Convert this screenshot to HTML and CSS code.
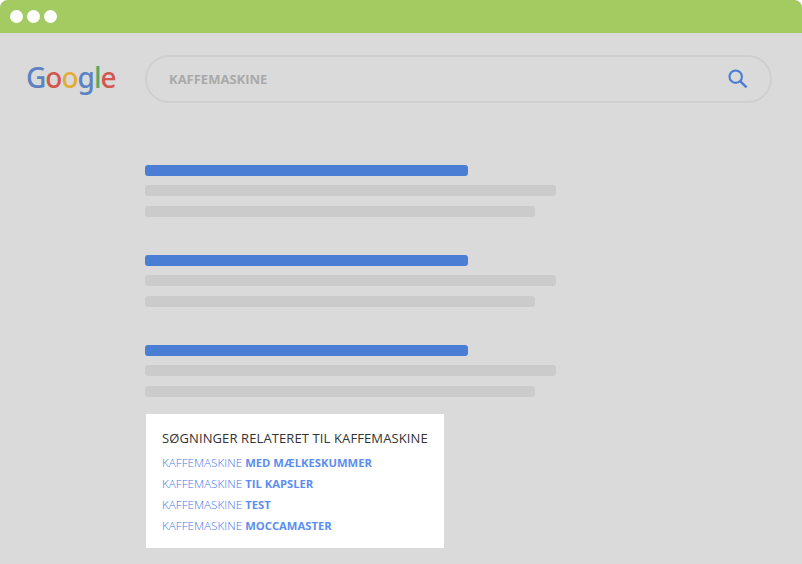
FILE: index.html
```html
<!DOCTYPE html>
<html lang="en">
<head>
    <meta charset="UTF-8">
    <meta name="viewport" content="width=device-width, initial-scale=1.0">
    <title>Kaffemaskine</title>
    <link rel="stylesheet" href="styles.css">
</head>
<body>
    <div class="window">
        <div class="titlebar">
            <span class="dot"></span>
            <span class="dot"></span>
            <span class="dot"></span>
        </div>
        <div class="header">
            <div class="logo"><span class="blue">G</span><span class="red">o</span><span class="yellow">o</span><span class="blue">g</span><span class="green">l</span><span class="red">e</span></div>
            <div class="searchbox">
                <span class="query">KAFFEMASKINE</span>
                <svg class="search-icon" width="20" height="20" viewBox="0 0 20 20">
                    <circle cx="7.7" cy="7.7" r="6.2" fill="none" stroke="#4a7dd4" stroke-width="2.1"/>
                    <line x1="12.3" y1="12.3" x2="18.6" y2="18.4" stroke="#4a7dd4" stroke-width="2.4"/>
                </svg>
            </div>
        </div>
        <div class="results">
            <div class="result">
                <div class="bar title"></div>
                <div class="bar line"></div>
                <div class="bar line short"></div>
            </div>
            <div class="result">
                <div class="bar title"></div>
                <div class="bar line"></div>
                <div class="bar line short"></div>
            </div>
            <div class="result">
                <div class="bar title"></div>
                <div class="bar line"></div>
                <div class="bar line short"></div>
            </div>
        </div>
        <div class="related">
            <h2>SØGNINGER RELATERET TIL KAFFEMASKINE</h2>
            <ul>
                <li>KAFFEMASKINE <b>MED MÆLKESKUMMER</b></li>
                <li>KAFFEMASKINE <b>TIL KAPSLER</b></li>
                <li>KAFFEMASKINE <b>TEST</b></li>
                <li>KAFFEMASKINE <b>MOCCAMASTER</b></li>
            </ul>
        </div>
    </div>
</body>
</html>
```

FILE: styles.css
```css
html, body { margin: 0; padding: 0; background-color: #fff; }
body { font-family: "Open Sans", Arial, sans-serif; }
.window { width: 802px; height: 564px; background-color: #dadada; border-radius: 8px 8px 0 0; overflow: hidden; }
.titlebar { height: 33px; background-color: #a3cb62; display: flex; align-items: center; gap: 4px; padding-left: 9.5px; padding-bottom: 1px; box-sizing: border-box; }
.dot { width: 13px; height: 13px; background-color: #fff; border-radius: 50%; }
.header { display: flex; align-items: center; padding: 22px 30px 0 26px; }
.logo { width: 119px; padding-bottom: 3px; font-family: "Noto Sans", sans-serif; font-size: 28px; font-weight: 500; line-height: 45px; letter-spacing: -1px; }
.blue { color: #5b83c4; }
.red { color: #d2574e; }
.yellow { color: #e2ae35; }
.green { color: #55a868; }
.searchbox { width: 627px; height: 48px; box-sizing: border-box; border: 2px solid #cfcfcf; border-radius: 24px; display: flex; align-items: center; justify-content: space-between; padding: 0 22px 0 22px; }
.query { font-size: 13px; font-weight: 700; color: #a9a9a9; }
.results { display: flex; flex-direction: column; gap: 38px; padding: 62px 0 0 145px; }
.bar { height: 11px; border-radius: 3px; }
.title { width: 323px; background-color: #4a7dd4; }
.line { width: 411px; background-color: #cbcbcb; margin-top: 9px; }
.short { width: 389.5px; margin-top: 10px; }
.related { width: 298px; height: 134px; box-sizing: border-box; margin: 17px 0 0 146px; padding: 15px 0 0 16px; background-color: #fff; }
.related h2 { margin: 0 0 5px 0; font-size: 13px; line-height: 18px; font-weight: 400; letter-spacing: 0.11px; color: #333; white-space: nowrap; }
.related ul { margin: 0; padding: 0; list-style: none; }
.related li { font-size: 11.7px; line-height: 21px; font-weight: 300; color: #3f78ec; white-space: nowrap; }
.related b { font-size: 11.25px; font-weight: 700; color: #5b8ef0; }
```
